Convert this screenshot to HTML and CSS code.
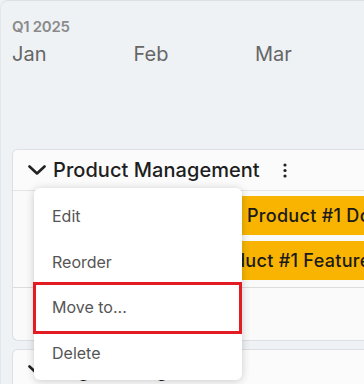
FILE: index.html
```html
<!DOCTYPE html>
<html lang="en">
<head>
    <meta charset="UTF-8">
    <meta name="viewport" content="width=device-width, initial-scale=1.0">
    <title>Roadmap</title>
    <link rel="stylesheet" href="styles.css">
</head>
<body>
    <div class="board">
        <div class="timeline">
            <div class="quarter">Q1 2025</div>
            <div class="months">
                <div class="month">Jan</div>
                <div class="month">Feb</div>
                <div class="month">Mar</div>
            </div>
        </div>

        <div class="lane">
            <div class="lane-head">
                <svg class="chevron" width="18" height="10" viewBox="0 0 18 10"><polyline points="1.5,1.5 9,8.5 16.5,1.5" fill="none" stroke="#222" stroke-width="2.6" stroke-linecap="round" stroke-linejoin="round"/></svg>
                <span class="lane-title">Product Management</span>
                <svg class="kebab" width="4" height="15" viewBox="0 0 4 15"><circle cx="2" cy="2" r="1.6" fill="#222"/><circle cx="2" cy="7.5" r="1.6" fill="#222"/><circle cx="2" cy="13" r="1.6" fill="#222"/></svg>
            </div>
            <div class="bars">
                <div class="bar-row"><div class="bar bar-one">Product #1 Domain Launch</div></div>
                <div class="bar-row"><div class="bar bar-two">Product #1 Feature Release</div></div>
            </div>
            <div class="lane-empty"></div>
        </div>

        <div class="lane">
            <div class="lane-head">
                <svg class="chevron" width="18" height="10" viewBox="0 0 18 10"><polyline points="1.5,1.5 9,8.5 16.5,1.5" fill="none" stroke="#222" stroke-width="2.6" stroke-linecap="round" stroke-linejoin="round"/></svg>
                <span class="lane-title">Engineering Team</span>
            </div>
        </div>

        <ul class="menu">
            <li class="menu-item">Edit</li>
            <li class="menu-item">Reorder</li>
            <li class="menu-item is-marked">Move to...</li>
            <li class="menu-item">Delete</li>
        </ul>
    </div>
</body>
</html>
```

FILE: styles.css
```css
body {
    margin: 0;
    background-color: #eef2f5;
    font-family: Inter, "Noto Sans", sans-serif;
    overflow: hidden;
}
.board {
    position: relative;
    height: 384px;
    border-top: 1px solid #dde1e5;
    border-left: 1px solid #e4e7ea;
    border-top-left-radius: 8px;
    overflow: hidden;
}
.timeline {
    height: 148px;
    box-sizing: border-box;
    padding: 17px 0 0 11px;
}
.quarter {
    font-size: 15px;
    line-height: 18px;
    font-weight: 600;
    color: #8a8a8a;
    letter-spacing: -0.3px;
}
.months {
    display: grid;
    grid-template-columns: repeat(3, 121.5px);
    margin-top: 6px;
}
.month {
    font-size: 20px;
    line-height: 24px;
    color: #666;
}
.lane {
    margin: 0 0 8px 11px;
    background: #fafafa;
    border: 1px solid #dcdfe3;
    border-right: 0;
    border-radius: 6px 0 0 6px;
    overflow: hidden;
}
.lane-head {
    display: flex;
    align-items: center;
    height: 40px;
    padding-left: 15px;
    border-bottom: 1px solid #e2e4e7;
    background: #fbfbfb;
}
.chevron {
    flex: none;
}
.lane-title {
    margin-left: 7px;
    font-size: 20px;
    font-weight: 500;
    color: #1e1e1e;
    white-space: nowrap;
    letter-spacing: 0.05px;
}
.kebab {
    margin-left: 23px;
    flex: none;
}
.bars {
    padding: 5px 0 7px;
    border-bottom: 1px solid #dcdcdc;
}
.bar-row {
    height: 39px;
    margin-bottom: 6px;
    white-space: nowrap;
}
.bar-row:last-child {
    margin-bottom: 0;
}
.bar {
    display: inline-block;
    height: 39px;
    line-height: 39px;
    padding: 0 20px 0 7px;
    background: #f8b400;
    color: #1a1a1a;
    font-size: 18px;
    font-weight: 500;
    letter-spacing: 0.3px;
}
.bar-one {
    margin-left: 227px;
}
.bar-two {
    margin-left: 184px;
}
.lane-empty {
    height: 52px;
}
.menu {
    position: absolute;
    left: 33px;
    top: 187px;
    width: 208px;
    margin: 0;
    padding: 6px 0 4px;
    list-style: none;
    background: #fff;
    border-radius: 6px;
    box-shadow: 0 1px 8px rgba(0,0,0,0.2);
}
.menu-item {
    position: relative;
    height: 45.5px;
    line-height: 45.5px;
    padding-left: 18px;
    font-size: 16px;
    color: #555;
}
.menu-item.is-marked::after {
    content: "";
    position: absolute;
    top: -3px;
    bottom: -3px;
    left: -1px;
    right: 0;
    border: 3px solid #e31b23;
}
```
